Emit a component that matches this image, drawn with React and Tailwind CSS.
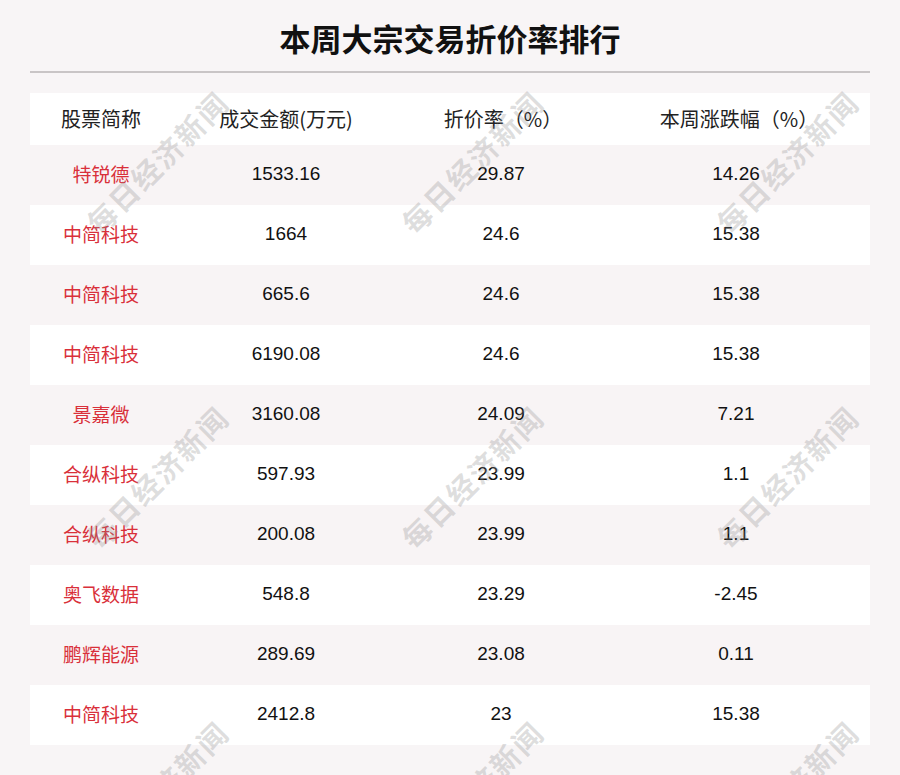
import React from "react";

const rows = [
  ["特锐德", "1533.16", "29.87", "14.26"],
  ["中简科技", "1664", "24.6", "15.38"],
  ["中简科技", "665.6", "24.6", "15.38"],
  ["中简科技", "6190.08", "24.6", "15.38"],
  ["景嘉微", "3160.08", "24.09", "7.21"],
  ["合纵科技", "597.93", "23.99", "1.1"],
  ["合纵科技", "200.08", "23.99", "1.1"],
  ["奥飞数据", "548.8", "23.29", "-2.45"],
  ["鹏辉能源", "289.69", "23.08", "0.11"],
  ["中简科技", "2412.8", "23", "15.38"],
];

const marks = [
  "left-[157px] top-[162px]",
  "left-[472px] top-[162px]",
  "left-[787px] top-[162px]",
  "left-[157px] top-[477px]",
  "left-[472px] top-[477px]",
  "left-[787px] top-[477px]",
  "left-[157px] top-[792px]",
  "left-[472px] top-[792px]",
  "left-[787px] top-[792px]",
];

export default function App() {
  return (
    <div className="relative w-[900px] h-[775px] overflow-hidden bg-[#f8f5f6] font-['Noto_Sans_CJK_SC','Noto_Sans',sans-serif]">
      <div className="px-[30px] pt-[20px]">
        <h1 className="text-center text-[31px] leading-[36px] font-bold text-[#111]">
          本周大宗交易折价率排行
        </h1>
        <div className="mt-[15px] h-[2px] bg-[#c9c5c6]" />
        <div className="mt-[20px]">
          <div className="grid grid-cols-[142px_228px_202px_268px] h-[52px] items-center bg-white text-[20px] text-[#222] text-center">
            <div>股票简称</div>
            <div>成交金额(万元)</div>
            <div className="pl-[4px]">折价率（%）</div>
            <div className="pl-[6px]">本周涨跌幅（%）</div>
          </div>
          {rows.map((r, i) => (
            <div
              key={i}
              className={
                i % 2 === 0
                  ? "grid grid-cols-[142px_228px_202px_268px] h-[60px] items-center text-center bg-[#f8f4f5]"
                  : "grid grid-cols-[142px_228px_202px_268px] h-[60px] items-center text-center bg-white"
              }
            >
              <div className="text-[19px] text-[#d9303a] -mt-[2px]">{r[0]}</div>
              <div className="text-[19px] text-[#111] -mt-[2px] font-['Liberation_Sans',Arial,sans-serif]">
                {r[1]}
              </div>
              <div className="text-[19px] text-[#111] -mt-[2px] font-['Liberation_Sans',Arial,sans-serif]">
                {r[2]}
              </div>
              <div className="text-[19px] text-[#111] -mt-[2px] font-['Liberation_Sans',Arial,sans-serif]">
                {r[3]}
              </div>
            </div>
          ))}
        </div>
      </div>
      {marks.map((m, i) => (
        <div
          key={i}
          aria-hidden="true"
          className={
            "pointer-events-none select-none absolute -translate-x-1/2 -translate-y-1/2 -rotate-45 whitespace-nowrap text-[29px] font-bold tracking-[2px] text-[rgba(140,140,140,0.28)] " +
            m
          }
        >
          每日经济新闻
        </div>
      ))}
    </div>
  );
}
